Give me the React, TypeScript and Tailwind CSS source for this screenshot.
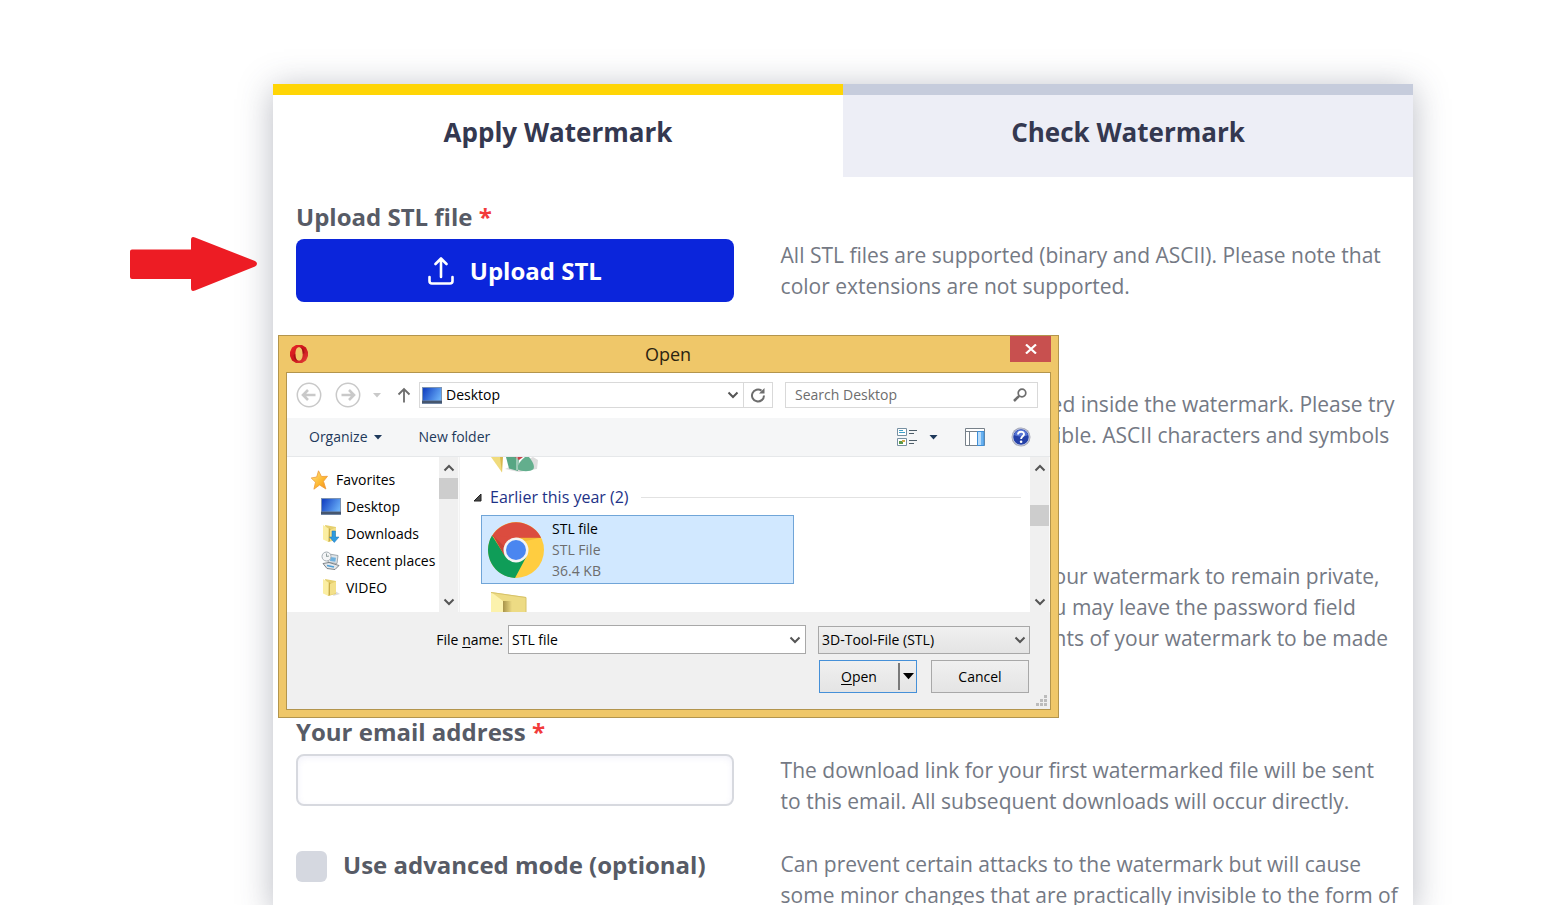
import React, { ReactNode } from "react";

function Chevron({ up = false, className = "" }: { up?: boolean; className?: string }) {
  return (
    <svg viewBox="0 0 12 8" className={`h-2 w-3 ${className}`} fill="none" stroke="#555" strokeWidth="2">
      <path d={up ? "M1.5 6.5 6 2l4.500 4.500" : "M1.500 1.500 6 6l4.500-4.500"} />
    </svg>
  );
}

function Caret({ className = "" }: { className?: string }) {
  return (
    <svg viewBox="0 0 8 5" className={className} fill="currentColor">
      <path d="M0 0h8L4 4.500z" />
    </svg>
  );
}

function OperaIcon() {
  return (
    <svg viewBox="0 0 20 20" className="h-5 w-5">
      <defs>
        <linearGradient id="opera" x1="0" x2="1" y1="0" y2="1">
          <stop offset="0" stopColor="#f02a2a" />
          <stop offset="0.5" stopColor="#c8141b" />
          <stop offset="1" stopColor="#e8453c" />
        </linearGradient>
      </defs>
      <path
        fill="url(#opera)"
        fillRule="evenodd"
        d="M7 1h6l4 2.500 2 4.500v4l-2 4.500-4 2.500H7l-4-2.500L1 12V8l2-4.500zM10 3.300C7.700 3.300 6.400 6 6.400 10s1.300 6.700 3.600 6.700 3.700-2.700 3.700-6.700S12.300 3.300 10 3.300Z"
      />
      <path fill="#8e0d12" opacity="0.600" d="M10 3.300c2.300 0 3.700 2.700 3.700 6.700l1.800-1C15 5 13 2.500 10 3.300zM10 16.700C7.700 16.700 6.400 14 6.400 10l-1.800 1c.4 4 2.400 6.500 5.400 5.700z" />
    </svg>
  );
}

function MonitorIcon() {
  return (
    <svg viewBox="0 0 20 17" className="h-[17px] w-5 shrink-0">
      <defs>
        <linearGradient id="screen" x1="0" x2="1" y1="0.300" y2="0.700">
          <stop offset="0" stopColor="#1746c4" />
          <stop offset="1" stopColor="#68aef8" />
        </linearGradient>
      </defs>
      <rect width="20" height="17" fill="#7c93b2" />
      <rect x="1" y="1" width="18" height="12.500" fill="url(#screen)" />
      <path d="M0 15h20" stroke="#46566e" strokeWidth="2.500" />
    </svg>
  );
}

function StarIcon() {
  return (
    <svg viewBox="0 0 20 20" className="h-5 w-5 shrink-0">
      <defs>
        <linearGradient id="star" x1="0" x2="1" y1="0" y2="1">
          <stop offset="0" stopColor="#ffe98a" />
          <stop offset="0.600" stopColor="#fdb62f" />
          <stop offset="1" stopColor="#f08a1c" />
        </linearGradient>
      </defs>
      <path
        fill="url(#star)"
        stroke="#ee9a3a"
        strokeWidth="0.800"
        d="m8.500.8 3 5.700 6-.2-4 5 2.400 7.700-6.300-4-5.700 4.200L5.500 12.200 1.200 8l5.500-1z"
      />
    </svg>
  );
}

function FolderShape() {
  return (
    <>
      <path fill="#e5cf6e" d="m4 1 11 2v13l-8 2z" />
      <path fill="#c9ad48" d="m8 4 1.500 1.500V17L7 18z" />
      <path fill="#fbeea2" d="m2 1 5.500 3.500V18L2 15.500z" />
      <path fill="#f3e08a" d="m9 6 6-2.500V15l-6 2z" />
    </>
  );
}

function FolderIcon() {
  return (
    <svg viewBox="0 0 20 20" className="h-5 w-5 shrink-0">
      <path fill="#ddd" d="m14 13 5 3-7 2z" />
      <FolderShape />
    </svg>
  );
}

function DownloadsIcon() {
  return (
    <svg viewBox="0 0 20 20" className="h-5 w-5 shrink-0">
      <FolderShape />
      <path fill="#2e9be0" stroke="#1b75b8" strokeWidth="0.500" d="M11 7h3.500v6H18l-4.700 5.500L8.500 13H11z" />
    </svg>
  );
}

function RecentIcon() {
  return (
    <svg viewBox="0 0 20 20" className="h-5 w-5 shrink-0">
      <path fill="#dfe4e8" stroke="#8d979e" strokeWidth="0.800" d="m8 3 9 1.500-1 8-9-1z" />
      <path fill="#6eb1de" d="m9.500 6 5.500.8-.7 4-5.300-.8z" />
      <path fill="#e4e7ea" stroke="#6f777d" strokeWidth="0.900" d="m2 12.500 6-1 10 3-4 4-8-1z" />
      <path stroke="#4da0d8" strokeWidth="1.500" d="m6 14.500 7 1.500" />
      <circle cx="5.500" cy="5.500" r="4.500" fill="#f4f5f6" stroke="#a5adb3" />
      <path d="M5.500 2.500v3L8 5" fill="none" stroke="#788" strokeWidth="0.800" />
    </svg>
  );
}

function ChromeIcon() {
  return (
    <svg viewBox="0 0 56 56" className="h-14 w-14 shrink-0">
      <circle cx="28" cy="28" r="28" fill="#ffcd40" />
      <path fill="#db4c3f" d="M28 28 4 14a28 28 0 0 1 48.200 0L53 16H28z" />
      <path fill="#0f9d58" d="M4 13.600A28 28 0 0 0 27 56l11.500-21.500L28 28 16.500 33z" />
      <path fill="#db4c3f" d="M4.500 13 16.500 33.500 28 28 30 16z" />
      <path fill="#b33b30" opacity="0.500" d="m4.500 13 12 20.500 2-7z" />
      <path fill="#e8a52c" opacity="0.500" d="M28 15.500h25l-17 4z" />
      <circle cx="28" cy="28" r="12.500" fill="#f4f4f4" />
      <circle cx="28" cy="28" r="10" fill="#4a86f0" />
    </svg>
  );
}

function NavArrow({ flip = false }: { flip?: boolean }) {
  return (
    <svg viewBox="0 0 26 26" className="h-[26px] w-[26px]" fill="none" stroke="#c9c9c9">
      <circle cx="13" cy="13" r="11.700" strokeWidth="1.500" />
      <path strokeWidth="2.600" d={flip ? "M6.500 13H19M14 8l5 5-5 5" : "M19.500 13H7M12 8l-5 5 5 5"} />
    </svg>
  );
}

function ScrollBar({ thumb }: { thumb: ReactNode }) {
  return (
    <div className="flex w-5 shrink-0 flex-col items-center border-r border-[#fafafa] bg-[#f0f0f0]">
      <button type="button" aria-label="Scroll up" className="flex h-[21px] w-full items-center justify-center">
        <Chevron up />
      </button>
      <div className="w-full flex-1">{thumb}</div>
      <button type="button" aria-label="Scroll down" className="flex h-[21px] w-full items-center justify-center">
        <Chevron />
      </button>
    </div>
  );
}

const places = [
  { name: "Desktop", icon: <MonitorIcon /> },
  { name: "Downloads", icon: <DownloadsIcon /> },
  { name: "Recent places", icon: <RecentIcon /> },
  { name: "VIDEO", icon: <FolderIcon /> },
];

function OpenDialog() {
  return (
    <div
      role="dialog"
      aria-label="Open"
      className="absolute top-[335px] left-[278px] w-[781px] border border-[#b3954d] bg-[#efc769] px-[7px] pb-[7px] text-sm text-black"
    >
      <div className="flex h-9 items-start">
        <div className="flex w-10 items-center pt-2 pl-[3px]">
          <OperaIcon />
        </div>
        <h2 className="flex-1 pt-1 text-center text-lg leading-7 text-[#2b2410]">Open</h2>
        <button type="button" aria-label="Close" className="flex h-[26px] w-[41px] items-center justify-center bg-[#c8504f]">
          <svg viewBox="0 0 12 10" className="h-[10px] w-3" stroke="#fff" strokeWidth="2.200">
            <path d="m1 0.500 10 9M11 0.500l-10 9" />
          </svg>
        </button>
      </div>

      <div className="border border-[#b3954d] bg-white">
        <div className="flex h-[45px] items-center pr-3 pb-px pl-[9px]">
          <button type="button" aria-label="Back"><NavArrow /></button>
          <button type="button" aria-label="Forward" className="ml-[13px]"><NavArrow flip /></button>
          <button type="button" aria-label="Recent locations" className="ml-3 text-[#c9c9c9]">
            <Caret className="h-[5px] w-2" />
          </button>
          <button type="button" aria-label="Up one level" className="ml-4">
            <svg viewBox="0 0 14 16" className="h-4 w-[14px]" fill="none" stroke="#6d6d6d" strokeWidth="1.800">
              <path d="M7 15.500V2M1.500 7.500 7 2l5.500 5.500" />
            </svg>
          </button>
          <div className="ml-2 flex h-[26px] flex-1 border border-[#d9d9d9]">
            <div className="flex flex-1 items-center gap-1 pl-[2px]">
              <MonitorIcon />
              <span className="flex-1">Desktop</span>
              <button type="button" aria-label="Previous locations" className="mr-1"><Chevron /></button>
            </div>
            <button
              type="button"
              aria-label="Refresh"
              className="flex w-[29px] items-center justify-center border-l border-[#d9d9d9]"
            >
              <svg viewBox="0 0 16 16" className="h-4 w-4" fill="none" stroke="#6d6d6d" strokeWidth="2">
                <path d="M11.500 3.600A6 6 0 1 0 14 8.500" />
                <path d="M14.500 1v5.500H9z" fill="#6d6d6d" stroke="none" />
              </svg>
            </button>
          </div>
          <label className="ml-3 flex h-[26px] w-[253px] items-center border border-[#d9d9d9] pr-[10px] pl-[9px]">
            <input
              type="search"
              aria-label="Search Desktop"
              placeholder="Search Desktop"
              className="min-w-0 flex-1 outline-none placeholder:text-[#6d6d6d]"
            />
            <svg viewBox="0 0 14 14" className="h-[14px] w-[14px]" fill="none" stroke="#6d6d6d">
              <circle cx="9" cy="5" r="3.800" strokeWidth="1.700" />
              <path d="M6.200 7.800 1 13" strokeWidth="2.500" />
            </svg>
          </label>
        </div>

        <div className="flex h-[39px] items-center border-b border-[#e6e8ea] bg-[#f5f6f7] pr-[19px] pl-[22px] text-[#1e395b]">
          <button type="button" className="flex items-center gap-[6px]">
            Organize <Caret className="h-[5px] w-2" />
          </button>
          <button type="button" className="ml-[37px]">New folder</button>
          <div className="flex-1" />
          <button type="button" aria-label="Change view" className="flex items-center gap-3">
            <svg viewBox="0 0 20 20" className="h-5 w-5" fill="none">
              <g fill="#fff" stroke="#7690a2">
                <path d="M.5 1.500h9v7h-9zM.5 11.500h9v7h-9z" />
              </g>
              <path d="M2 5.500h6M2 3.500h4" stroke="#3fa0c8" />
              <path d="M2 14h4v3H2z" fill="#5a9a4a" />
              <path d="M5 13h3v2H5z" fill="#d0a94a" />
              <path d="M12 3.500h8M12 6.500h5M12 13.500h8M12 16.500h5" stroke="#4d5d69" />
            </svg>
            <Caret className="h-[5px] w-[9px]" />
          </button>
          <button type="button" aria-label="Preview pane" className="ml-[27px]">
            <svg viewBox="0 0 20 18" className="h-[18px] w-5">
              <path fill="#fff" stroke="#77818a" d="M.5.5h19v17H.5z" />
              <path stroke="#77818a" d="M.5 3.500h19M4.500 3.500v14" />
              <path fill="#69b1f0" stroke="#3e8fd8" d="M12.500 3.500h6.500v14h-6.500z" />
              <path fill="#b9dcfa" d="M13 4h3v13h-3z" />
            </svg>
          </button>
          <button type="button" aria-label="Help" className="ml-[26px]">
            <svg viewBox="0 0 20 20" className="h-5 w-5">
              <circle cx="10" cy="10" r="9.500" fill="#a2a5b4" />
              <circle cx="10" cy="10" r="8.200" fill="#2440a8" stroke="#dbe0f0" strokeWidth="0.800" />
              <path fill="#5674d4" d="M3 8a7.300 7.300 0 0 1 14 0c-4 2-10 2-14 0Z" />
              <path d="M7 7.500C7 3.700 13 3.900 13 7.200c0 2.100-2.900 2.200-2.900 4.800" fill="none" stroke="#fff" strokeWidth="1.900" />
              <circle cx="10.100" cy="14.700" r="1.300" fill="#fff" />
            </svg>
          </button>
        </div>

        <div className="flex h-[155px]">
          <nav aria-label="Places" className="w-[152px] overflow-hidden pt-[9px] whitespace-nowrap">
            <div className="flex h-[27px] items-center gap-[6px] pl-[23px]">
              <StarIcon />
              Favorites
            </div>
            <ul className="pl-[34px]">
              {places.map((place) => (
                <li key={place.name} className="flex h-[27px] items-center gap-[5px]">
                  {place.icon}
                  {place.name}
                </li>
              ))}
            </ul>
          </nav>
          <ScrollBar thumb={<div className="h-[21px] bg-[#cdcdcd]" />} />
          <div className="flex-1 overflow-hidden border-l border-[#f2f2f2]">
            <div className="h-[26px] pl-[31px]">
              <svg viewBox="0 0 48 16" className="h-4 w-12">
                <path fill="#ddd" d="m14 12 14 3 18-3 1-9-5-3z" />
                <path fill="#f0db7c" d="M0 0h11v15.500z" />
                <path fill="#d8b94e" d="M9 0h3l-1 15.500z" />
                <path fill="#57a683" d="M15 0h13l-1 14-9-2.500z" />
                <path fill="#c3444a" d="M24 0h8l-4 3z" />
                <path fill="#63ae8d" d="M34 0h4c3 4 6 8 4.500 12-3 3-12 3-16.500 0 1-5 4-9 8-12Z" />
                <path stroke="#dfeae4" d="M26 0v13" />
              </svg>
            </div>
            <div className="flex h-7 items-center pr-[9px] pl-[13px] text-base text-[#1e3287]">
              <svg viewBox="0 0 9 9" className="mr-2 h-[9px] w-[9px]">
                <path fill="#4a4a4a" stroke="#222" d="M8 1v7H1z" />
              </svg>
              Earlier this year (2)
              <span className="ml-3 h-px flex-1 bg-[#e2e2e2]" />
            </div>
            <div className="mt-1 ml-[21px] flex h-[69px] w-[313px] items-center gap-2 border border-[#70a5d8] bg-[#d1e8ff] pl-[6px]">
              <ChromeIcon />
              <div className="leading-[21px] text-[#6d6d6d]">
                <p className="text-black">STL file</p>
                <p>STL File</p>
                <p>36.4 KB</p>
              </div>
            </div>
            <svg viewBox="0 0 36 20" className="mt-2 ml-[31px] h-5 w-9">
              <defs>
                <linearGradient id="folder-fold">
                  <stop offset="0" stopColor="#a8934a" />
                  <stop offset="1" stopColor="#eddb84" />
                </linearGradient>
              </defs>
              <path fill="#eddb84" d="m0 0 35 5v15H0z" />
              <path fill="url(#folder-fold)" d="M12 9h9v11h-9z" />
              <path fill="#fcf2ad" d="m0 0 12 9v11H0z" />
              <path fill="none" stroke="#d6c26a" d="m0 .5 35 5V20" />
            </svg>
          </div>
          <ScrollBar thumb={<div className="mt-[27px] h-[21px] bg-[#cdcdcd]" />} />
        </div>

        <div className="flex flex-col gap-[6px] bg-[#f0f0f0] pt-[13px] pr-5">
          <div className="flex items-center justify-end">
            <label htmlFor="file-name" className="mr-[5px]">
              File <u className="underline-offset-2">n</u>ame:
            </label>
            <div className="flex h-[29px] w-[298px] items-center border border-[#a8a8a8] bg-white pr-1 pl-[3px]">
              <input id="file-name" defaultValue="STL file" className="min-w-0 flex-1 outline-none" />
              <button type="button" aria-label="Show file names"><Chevron /></button>
            </div>
            <div className="relative ml-3 w-[212px]">
              <select
                aria-label="File type"
                className="block h-7 w-full appearance-none border border-[#a8a8a8] bg-linear-to-b from-[#f0f0f0] to-[#e4e4e4] pl-[3px]"
              >
                <option>3D-Tool-File (STL)</option>
              </select>
              <Chevron className="pointer-events-none absolute top-[10px] right-1" />
            </div>
          </div>
          <div className="flex justify-end gap-[14px] pr-px">
            <div className="flex h-[33px] w-[98px] items-center border border-[#4590d8] bg-linear-to-b from-[#f0f0f0] to-[#e4e4e4]">
              <button type="button" className="h-full flex-1">
                <u className="underline-offset-2">O</u>pen
              </button>
              <button
                type="button"
                aria-label="More open options"
                className="flex h-[27px] w-[18px] items-center justify-center border-l-2 border-[#7a7a7a]"
              >
                <Caret className="h-[7px] w-[11px] text-black" />
              </button>
            </div>
            <button type="button" className="h-[33px] w-[98px] border border-[#a8a8a8] bg-linear-to-b from-[#f0f0f0] to-[#e4e4e4]">
              Cancel
            </button>
          </div>
          <div className="-mt-1 -mr-5 flex justify-end pr-[3px] pb-[3px]">
            <svg viewBox="0 0 11 11" className="h-[11px] w-[11px]" fill="#bcbcbc">
              <path d="M8 0h3v3H8zM4 4h3v3H4zM8 4h3v3H8zM0 8h3v3H0zM4 8h3v3H4zM8 8h3v3H8z" />
            </svg>
          </div>
        </div>
      </div>
    </div>
  );
}

function Required() {
  return <span className="text-[#f23b3b]">*</span>;
}

function Row({ children, lines, className, hint = "pt-10" }: { children?: ReactNode; lines: string[]; className: string; hint?: string }) {
  return (
    <div className={`flex gap-[47px] ${className}`}>
      <div className="w-2/5 shrink-0">{children}</div>
      <p className={`flex-1 text-[21px] leading-[31px] font-normal whitespace-nowrap text-[#747984] ${hint}`}>
        {lines.map((line) => (
          <span key={line} className="block">{line}</span>
        ))}
      </p>
    </div>
  );
}

export default function App() {
  return (
    <div className="relative h-screen overflow-hidden bg-white pt-[84px] pr-[134px] pl-[273px] font-['Open_Sans',sans-serif]">
      <main className="min-h-full bg-white shadow-[0_4px_32px_rgba(60,66,90,0.360)]">
        <div role="tablist" className="flex text-[26px] font-bold text-[#343850]">
          <button type="button" role="tab" aria-selected="true" className="h-[93px] flex-1 border-t-[11px] border-[#ffd505] pb-2">
            Apply Watermark
          </button>
          <button type="button" role="tab" aria-selected="false" className="h-[93px] flex-1 border-t-[11px] border-[#c6ccdc] bg-[#edeef6] pb-2">
            Check Watermark
          </button>
        </div>

        <form className="px-[23px] pt-[23px] text-2xl font-bold text-[#575b66]">
          <Row
            className="mb-[47px]"
            lines={["All STL files are supported (binary and ASCII). Please note that", "color extensions are not supported."]}
          >
            <h3 className="leading-[34px]">Upload STL file <Required /></h3>
            <button
              type="button"
              className="mt-[5px] flex h-[63px] w-full items-center justify-center gap-4 rounded-lg bg-[#0b25db] pt-px text-white"
            >
              <svg viewBox="0 0 26 28" className="h-7 w-[26px]" fill="none" stroke="#fff" strokeWidth="2.600" strokeLinecap="round" strokeLinejoin="round">
                <path d="M13 20V2M7.500 7 13 1.500 18.500 7M1.500 20v4a2.500 2.500 0 0 0 2.500 2.500h18a2.500 2.500 0 0 0 2.500-2.500v-4" />
              </svg>
              Upload STL
            </button>
          </Row>
          <Row
            className="mb-[70px]"
            hint="pt-10 pl-[270px]"
            lines={["ed inside the watermark. Please try", "\u00a0ible. ASCII characters and symbols"]}
          />
          <Row
            className="mb-[61px]"
            hint="pt-10 pl-[273px]"
            lines={["our watermark to remain private,", "u may leave the password field", "nts of your watermark to be made"]}
          />
          <Row
            className="mb-8"
            lines={["The download link for your first watermarked file will be sent", "to this email. All subsequent downloads will occur directly."]}
          >
            <label htmlFor="email" className="block leading-[34px]">Your email address <Required /></label>
            <input
              id="email"
              type="email"
              className="mt-[5px] block h-[52px] w-full rounded-lg border-2 border-[#d7d9df] px-3 text-xl font-normal shadow-[inset_0_2px_6px_rgba(90,90,190,0.080)] outline-none"
            />
          </Row>
          <Row
            className=""
            hint=""
            lines={["Can prevent certain attacks to the watermark but will cause", "some minor changes that are practically invisible to the form of"]}
          >
            <label className="flex items-start gap-4 leading-[31px]">
              <input type="checkbox" className="mt-[2px] h-[31px] w-[31px] appearance-none rounded-md bg-[#d5d8e0]" />
              Use advanced mode (optional)
            </label>
          </Row>
        </form>
      </main>

      <svg viewBox="0 0 128 54" className="absolute top-[237px] left-[130px] h-[54px] w-32" fill="#ed1c24">
        <path d="M2 12.500h59V3q0-4 4-2.500l60 23.500q4 2.500 0 5.500L65 53.500q-4 1.500-4-2.500v-9H2q-2 0-2-2V14.500q0-2 2-2Z" />
      </svg>

      <OpenDialog />
    </div>
  );
}
